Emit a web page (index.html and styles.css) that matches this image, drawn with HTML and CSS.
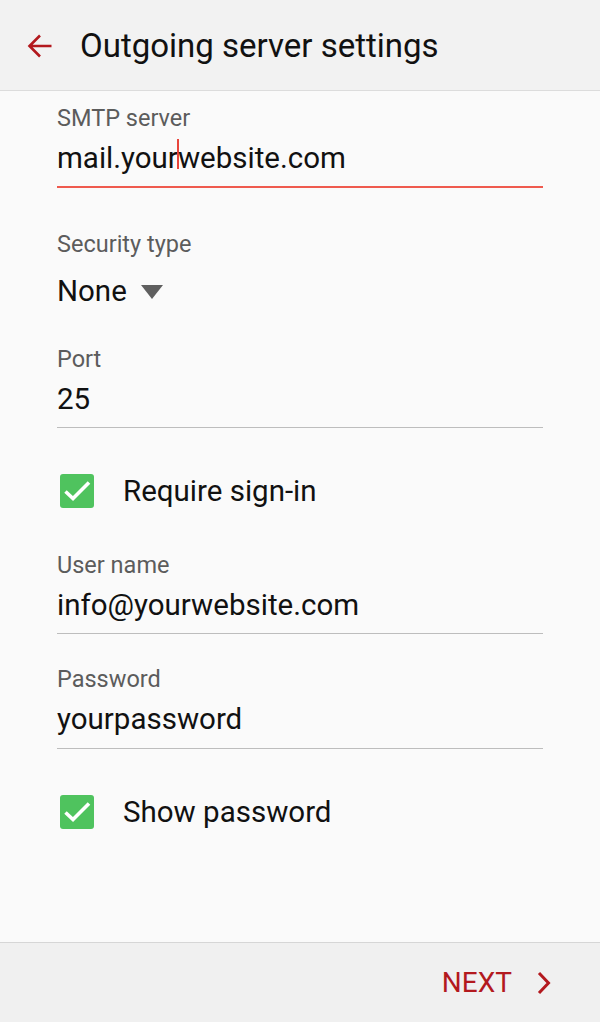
FILE: index.html
```html
<!DOCTYPE html>
<html>
<head>
<meta charset="utf-8">
<link rel="stylesheet" href="styles.css">
</head>
<body>
<div class="screen">
  <header class="appbar">
    <svg class="back" width="26" height="26" viewBox="0 0 26 26"><path d="M25.5 13H3.5M14 2.5L3.5 13L14 23.5" fill="none" stroke="#b3191e" stroke-width="2.6"/></svg>
    <h1 class="title">Outgoing server settings</h1>
  </header>
  <main class="content">
    <div class="field field-focused">
      <div class="label">SMTP server</div>
      <div class="value">mail.your<span class="cursor"></span>website.com</div>
    </div>
    <div class="field field-select">
      <div class="label">Security type</div>
      <div class="value select">None <span class="caret"></span></div>
    </div>
    <div class="field field-port">
      <div class="label">Port</div>
      <div class="value">25</div>
    </div>
    <div class="check-row check-first">
      <span class="checkbox"><svg width="34" height="34" viewBox="0 0 34 34"><path d="M5.5 17.5l7.5 7L29 8.5" fill="none" stroke="#fff" stroke-width="3.6"/></svg></span>
      <span class="check-label">Require sign-in</span>
    </div>
    <div class="field field-user">
      <div class="label">User name</div>
      <div class="value">info@yourwebsite.com</div>
    </div>
    <div class="field field-pass">
      <div class="label">Password</div>
      <div class="value">yourpassword</div>
    </div>
    <div class="check-row check-second">
      <span class="checkbox"><svg width="34" height="34" viewBox="0 0 34 34"><path d="M5.5 17.5l7.5 7L29 8.5" fill="none" stroke="#fff" stroke-width="3.6"/></svg></span>
      <span class="check-label">Show password</span>
    </div>
  </main>
  <footer class="bottombar">
    <span class="next">NEXT</span>
    <svg class="chev" width="16" height="24" viewBox="0 0 16 24"><path d="M3 2l9.5 10L3 22" fill="none" stroke="#b3191e" stroke-width="3"/></svg>
  </footer>
</div>
</body>
</html>
```
FILE: styles.css
```css
* { box-sizing: border-box; }
html, body { margin: 0; padding: 0; }
body {
  font-family: Roboto, "Noto Sans", sans-serif;
  background: #fafafa;
  color: #111;
}
.screen {
  width: 600px;
  height: 1022px;
  display: flex;
  flex-direction: column;
  background: #fafafa;
}
.appbar {
  height: 91px;
  flex: none;
  display: flex;
  align-items: center;
  background: #f2f2f2;
  border-bottom: 1px solid #dcdcdc;
  padding-left: 26px;
}
.back { flex: none; margin-top: 1px; }
.title {
  margin: 0 0 0 28px;
  font-weight: 400;
  font-size: 33px;
  color: #111;
}
.content {
  flex: 1;
  padding: 0 57px;
}
.field {
  border-bottom: 1px solid #bdbdbd;
}
.label {
  font-size: 23.5px;
  line-height: 24px;
  color: #5c5c5c;
}
.value {
  font-size: 29.5px;
  line-height: 36px;
  color: #111;
  margin-top: 10px;
  padding-bottom: 10px;
}
.field-focused { border-bottom: 2px solid #ef5a4e; margin-top: 15px; }
.field-focused .value { margin-top: 9px; padding-bottom: 10px; }
.cursor {
  display: inline-block;
  width: 2px;
  height: 30px;
  background: #e8453c;
  vertical-align: -1px;
  margin: 0 -1px;
}
.field-select { border-bottom: none; margin-top: 44px; }
.select { margin-top: 17px; padding-bottom: 0; display: flex; align-items: center; }
.caret {
  display: inline-block;
  width: 0; height: 0;
  border-left: 11px solid transparent;
  border-right: 11px solid transparent;
  border-top: 14px solid #5f5f5f;
  margin-left: 14px;
  margin-top: 1px;
}
.field-port { margin-top: 38px; }
.check-row {
  display: flex;
  align-items: center;
  height: 34px;
}
.checkbox {
  width: 34px; height: 34px;
  border-radius: 3px;
  background: #4fc35e;
  margin-left: 3px;
  display: flex;
}
.check-label {
  margin-left: 29px;
  font-size: 29.5px;
  color: #111;
}
.check-first { margin-top: 46px; }
.field-user { margin-top: 45px; }
.field-pass { margin-top: 33px; }
.field-pass .value { padding-bottom: 11px; }
.check-second { margin-top: 46px; }
.bottombar {
  flex: none;
  height: 80px;
  background: #f0f0f0;
  border-top: 1px solid #d6d6d6;
  display: flex;
  align-items: center;
  justify-content: flex-end;
  padding-right: 48px;
}
.next {
  font-size: 28px;
  color: #b3191e;
}
.chev { margin-left: 24px; }
```
